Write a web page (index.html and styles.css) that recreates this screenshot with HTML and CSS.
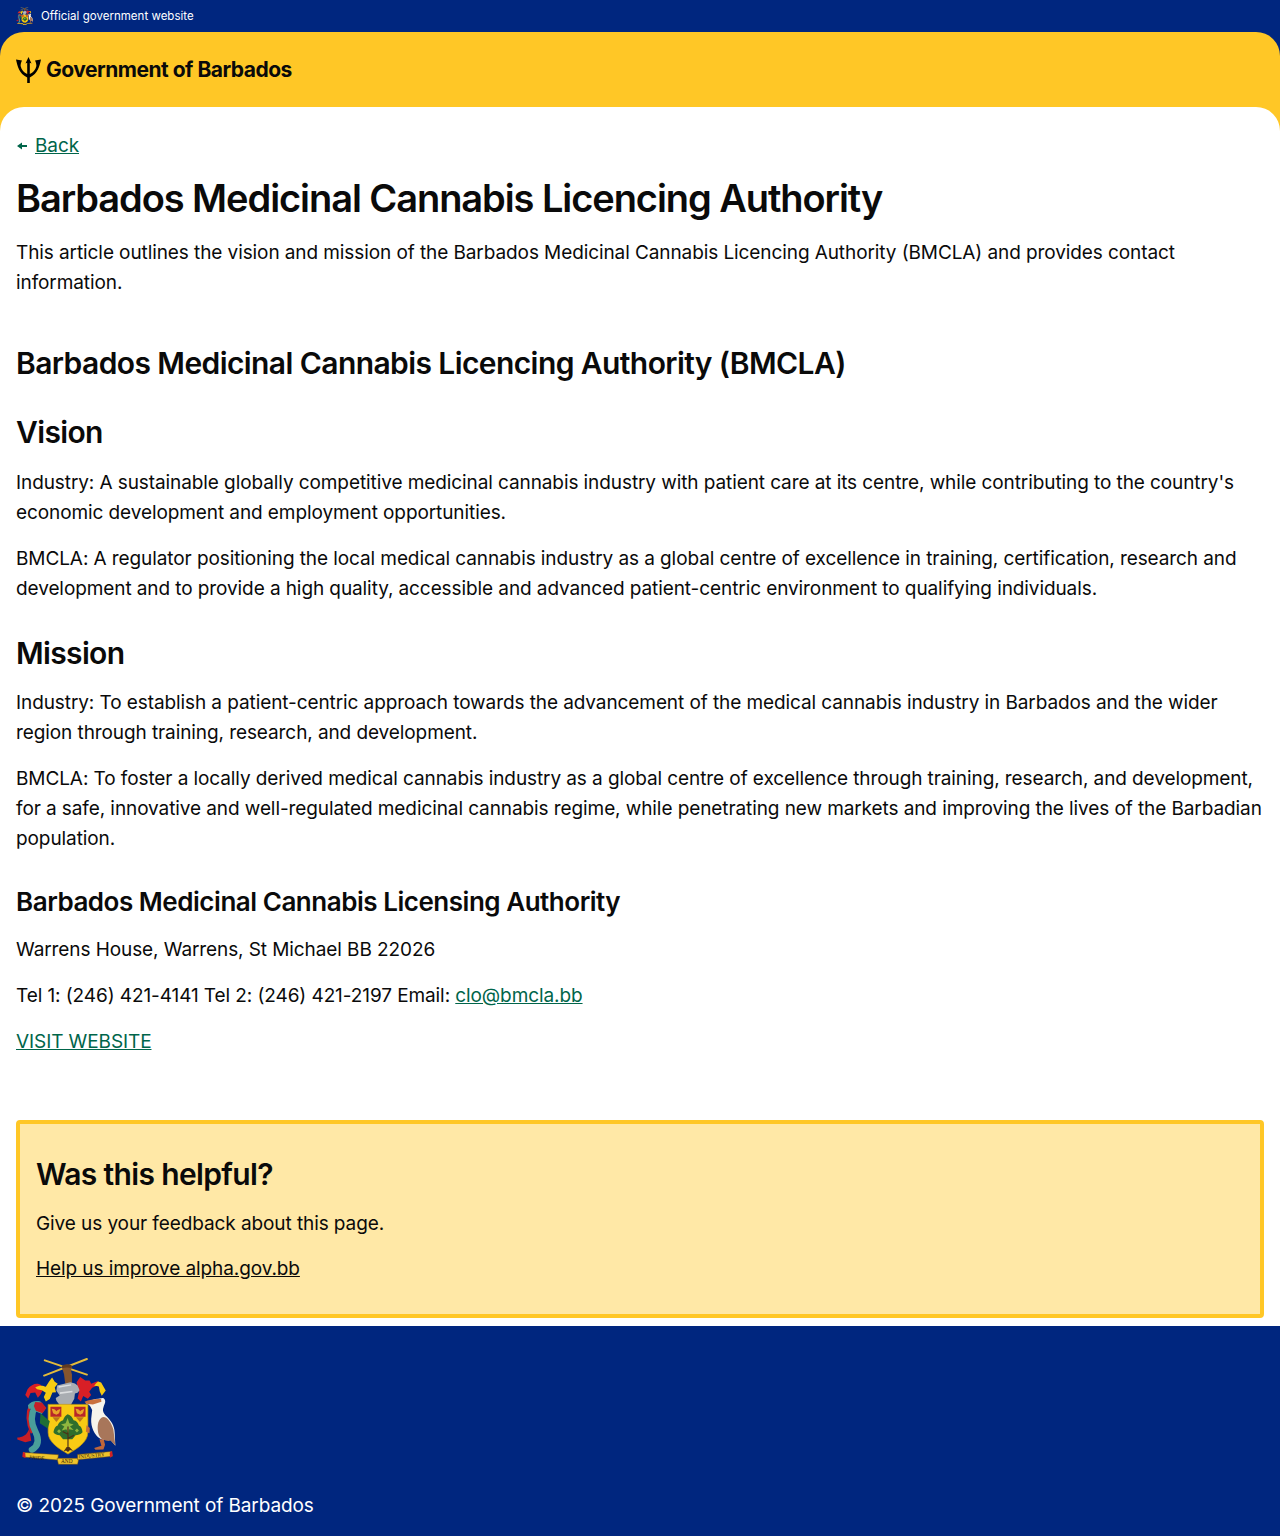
FILE: index.html
```html
<!DOCTYPE html>
<html lang="en">
<head>
<meta charset="utf-8">
<title>Barbados Medicinal Cannabis Licencing Authority</title>
<link rel="stylesheet" href="styles.css">
</head>
<body>
<svg class="defs" width="0" height="0" aria-hidden="true">
  <symbol id="crest" viewBox="48 55 302 323">
    <path d="M135 62 262 105M262 58 133 108" fill="none" stroke="#e3bb3a" stroke-width="6" stroke-linecap="round"/>
    <path d="M187 84c6-11 24-12 30-3l-3 12 3 12 0 26-20 3-4-30z" fill="#85552f"/>
    <path d="M186 78c8-4 22-5 31 0l-1 8c-8-3-20-3-29 0z" fill="#5f3b20"/>
    <path d="M83 149c13-17 30-21 41-12l6 12-8 16-8 10-8-16-14 2-7 16-9-10z" fill="#d81f26"/>
    <path d="M106 144c12-8 24-5 32-2l10-16 9-12 8 13 9 6-9 11 4 14-11 1-8 20-12 7-6-13 6-13-12-8-14-3z" fill="#f6cb12"/>
    <path d="M231 128l11-16 15 11 13 0 5 10 19-8 13 8 5 16-20-10-14 6-9 12 6 10-10 11-14-8-7 16-10-9 4-18z" fill="#d81f26"/>
    <path d="M296 126l9 3 14 24-12 16-6-13-3-16-14-1 6-8z" fill="#f6cb12"/>
    <path d="M172 138l40-10 14 4 8 6 6 14-6 8-8 2-2 16-10 18-14 4h-18l-12-16-2-8 12-8-10-14z" fill="#a9adb2"/>
    <path d="M176 140l38-6 1 4-38 7zM180 158l38-4 1 4-38 6z" fill="#dcdee0"/>
    <path d="M145 195h120v85c0 30-35 50-60 65-25-15-60-35-60-65z" fill="#f8cb14" stroke="#c9990e" stroke-width="2"/>
    <path d="M152 202h33v30h-33zM224 202h34v30h-34z" fill="#b8262a"/>
    <path d="M156 208c8 0 12 4 14 8 4-4 8-6 12-6l-4 12-8 4-10-4zM228 208c8 0 12 4 14 8 4-4 8-6 12-6l-4 12-8 4-10-4z" fill="#e8a32a"/>
    <path d="M158 234l12 14 12-14zM229 234l12 14 12-14z" fill="#b9761c"/>
    <path d="M204 225c10 3 14 10 18 18 8 1 14 8 16 16 6 2 10 10 11 20-6 8-14 8-21 9l-10 12h-28l-10-12c-8 0-14-2-19-9 2-10 6-18 13-20 2-8 8-14 16-16 3-8 8-15 14-18z" fill="#2f6e2c"/>
    <path d="M204 236l5 16 13 4-11 6 11 10-14-2-2 12-6-12-14 4 8-12-10-6 14-4zM178 270l6 6-6 6-6-6zM232 268l6 6-6 6-6-6z" fill="#8fb63f"/>
    <path d="M205 262v62M205 285l-16-8M205 298l18-10" stroke="#4c3017" stroke-width="3.5" fill="none"/>
    <path d="M191 338l10-14h8l12 12-10-3-6 6-6-5z" fill="#4c3017"/>
    <path d="M92 195C76 230 84 258 96 282" fill="none" stroke="#c71e26" stroke-width="8"/>
    <path d="M106 200C92 226 92 250 106 276 118 300 118 320 96 332" fill="none" stroke="#4a9e9a" stroke-width="19" stroke-linecap="round"/>
    <path d="M84 198c8-12 24-16 38-12l16 20-12 18-20-8-10-8-10 0z" fill="#4a9e9a"/>
    <path d="M106 188l20 1 14 17-12 16-20-8-6-14z" fill="#c71e26"/>
    <path d="M52 295c14 0 30-6 36-28l6 38-18 4-24-8z" fill="#c71e26"/>
    <path d="M122 222l28 24-6 22-24-16z" fill="#1f6e36"/>
    <path d="M258 192c14-8 26-14 38-14l14-2c8 2 10 12 4 22-4 12-6 18 4 30 16 14 28 32 28 52l2 40-16-20c-10 4-24 4-36-6-16-14-24-40-20-64l2-18c-4-10-8-18-20-20z" fill="#f6f4ec"/>
    <path d="M255 187c14-6 32-9 50-8l1 8-26 8-20-2z" fill="#c9703c"/>
    <path d="M306 235c14-8 30 14 36 36l6 48-14-14c-14 2-30-2-36-18-6-20-4-44 8-52z" fill="#a8765a"/>
    <path d="M261 258l10 8-1 16-11-4z" fill="#c9703c"/>
    <path d="M300 300l6 20-22 7 4 5 24-1 5-14-4-16z" fill="#c0663a"/>
    <path d="M70 340l106 7-2 16-104-9z" fill="#efc32b" stroke="#6e4a10" stroke-width="1.5"/>
    <path d="M172 358h66l-4 18h-58z" fill="#efc32b" stroke="#6e4a10" stroke-width="1.5"/>
    <path d="M234 346l103-9 2 15-105 10z" fill="#efc32b" stroke="#6e4a10" stroke-width="1.5"/>
    <path d="M69 338l-2 15 10 4-1-15zM338 335l2 15-8 6-1-15z" fill="#d21f26"/>
    <g class="motto">
      <text x="88" y="360" transform="rotate(4 88 360)">PRIDE</text>
      <text x="184" y="373">AND</text>
      <text x="237" y="358" transform="rotate(-5 237 358)">INDUSTRY</text>
    </g>
  </symbol>
</svg>

<div class="official">
  <svg class="official-crest"><use href="#crest"/></svg>
  <span>Official government website</span>
</div>

<div class="brand-wrap">
  <header class="brand">
    <svg class="trident" viewBox="0 0 25 26" aria-hidden="true">
      <path d="M12.5 0 15.5 6.5 13.8 5.8V17C17 15.5 19.5 13 20.4 9 20.4 7 19.8 5 19 3.5L25 2.5C23.5 9 22 16.5 13.8 20.5V26H11.2V20.5C3 16.5 1.5 9 0 2.5L6 3.5C5.2 5 4.6 7 4.6 9 5.5 13 8 15.5 11.2 17V5.8L9.5 6.5z" fill="#000"/>
    </svg>
    <span class="brand-name">Government of Barbados</span>
  </header>
</div>

<div class="page-wrap">
  <main class="page">
    <div class="back-row">
      <svg class="back-arrow" viewBox="0 0 10 8" aria-hidden="true"><path d="M0 4 5 0.5V3H10V5H5V7.5z"/></svg>
      <a href="#" class="link">Back</a>
    </div>

    <h1 class="title">Barbados Medicinal Cannabis Licencing Authority</h1>
    <p class="lede">This article outlines the vision and mission of the Barbados Medicinal Cannabis Licencing Authority (BMCLA) and provides contact information.</p>

    <h2 class="section-title">Barbados Medicinal Cannabis Licencing Authority (BMCLA)</h2>

    <h3 class="sub-title">Vision</h3>
    <p>Industry: A sustainable globally competitive medicinal cannabis industry with patient care at its centre, while contributing to the country's economic development and employment opportunities.</p>
    <p>BMCLA: A regulator positioning the local medical cannabis industry as a global centre of excellence in training, certification, research and development and to provide a high quality, accessible and advanced patient-centric environment to qualifying individuals.</p>

    <h3 class="sub-title">Mission</h3>
    <p>Industry: To establish a patient-centric approach towards the advancement of the medical cannabis industry in Barbados and the wider region through training, research, and development.</p>
    <p>BMCLA: To foster a locally derived medical cannabis industry as a global centre of excellence through training, research, and development, for a safe, innovative and well-regulated medicinal cannabis regime, while penetrating new markets and improving the lives of the Barbadian population.</p>

    <h4 class="contact-title">Barbados Medicinal Cannabis Licensing Authority</h4>
    <p>Warrens House, Warrens, St Michael BB 22026</p>
    <p>Tel 1: (246) 421-4141 Tel 2: (246) 421-2197 Email: <a href="#" class="link">clo@bmcla.bb</a></p>
    <p><a href="#" class="link">VISIT WEBSITE</a></p>

    <section class="feedback">
      <h2 class="feedback-title">Was this helpful?</h2>
      <p>Give us your feedback about this page.</p>
      <p><a href="#" class="feedback-link">Help us improve alpha.gov.bb</a></p>
    </section>
  </main>
</div>

<footer class="footer">
  <svg class="footer-crest"><use href="#crest"/></svg>
  <p class="copyright">© 2025 Government of Barbados</p>
</footer>
</body>
</html>
```
FILE: styles.css
```css
* { box-sizing: border-box; }
html, body { margin: 0; padding: 0; }
body {
  font-family: "Inter", "Noto Sans", sans-serif;
  font-size: 19px;
  line-height: 30px;
  letter-spacing: -0.09px;
  color: #0a0a0a;
  background: #00267f;
}
.defs { position: absolute; }
.official {
  height: 32px;
  display: flex;
  align-items: center;
  gap: 8px;
  padding: 0 16px;
  color: #fff;
  font-size: 11.5px;
  line-height: 16px;
  letter-spacing: 0.02px;
}
.official-crest { width: 17px; height: 18px; }
.brand-wrap { background: #00267f; }
.brand {
  height: 99px;
  margin-bottom: -24px;
  padding: 0 16px 24px;
  background: #ffc726;
  border-radius: 24px 24px 0 0;
  display: flex;
  align-items: center;
  gap: 5px;
}
.trident { width: 25px; height: 26px; flex: none; }
.brand-name { font-size: 21px; font-weight: 700; letter-spacing: -0.5px; }
.page-wrap { background: #ffc726; border-radius: 24px 24px 0 0; position: relative; }
.page {
  background: #fff;
  border-radius: 24px 24px 0 0;
  padding: 24px 16px 8px;
}
.back-row { display: flex; align-items: center; gap: 8px; }
.back-arrow { width: 10px; height: 8px; margin-left: 1px; fill: #00654a; }
.link { color: #00654a; }
.title { margin: 13px 0 16px; font-size: 38px; line-height: 48px; font-weight: 600; letter-spacing: -1.07px; }
p { margin: 0 0 16px; }
.lede { margin-bottom: 45px; }
.section-title { margin: 0 0 29px; font-size: 30px; line-height: 40px; font-weight: 600; letter-spacing: -0.59px; }
.sub-title { margin: 29px 0 15px; font-size: 30px; line-height: 40px; font-weight: 600; letter-spacing: -0.65px; }
.section-title + .sub-title { margin: 0 0 16px; }
.contact-title { margin: 28px 0 13px; font-size: 26px; line-height: 40px; font-weight: 600; letter-spacing: -0.47px; }
.feedback {
  margin-top: 63px;
  padding: 30px 16px 20px;
  height: 198px;
  background: #ffe8a6;
  border: 4px solid #ffc726;
  border-radius: 4px;
}
.feedback-title { margin: 0 0 15px; font-size: 30px; line-height: 40px; font-weight: 600; letter-spacing: -0.65px; }
.feedback p { margin-bottom: 15px; }
.feedback-link { color: #0a0a0a; }
.footer {
  background: #00267f;
  color: #fff;
  height: 210px;
  padding: 32px 16px;
}
.footer-crest { display: block; width: 100px; height: 107px; }
.copyright { margin: 26px 0 0; }
.motto text { font-family: "Liberation Serif", serif; font-size: 16px; fill: #2e2108; letter-spacing: 0; }
```
